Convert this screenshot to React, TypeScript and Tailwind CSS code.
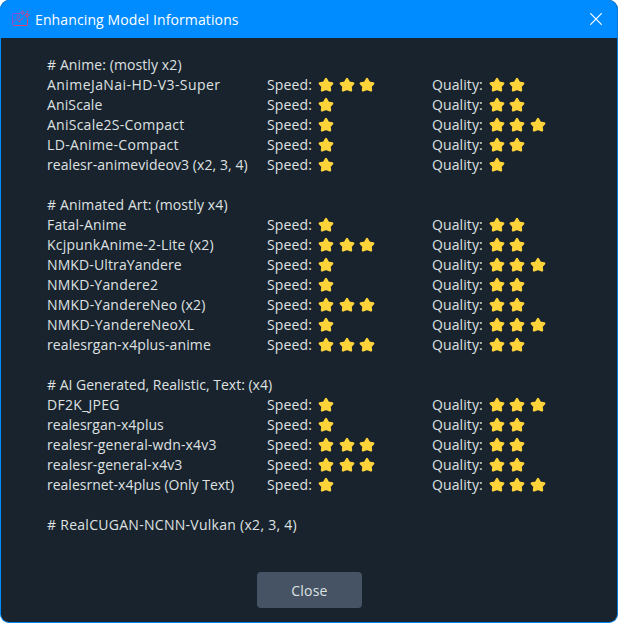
type Model = { name: string; speed: number; quality: number; tracking: string };
type Group = { title: string; tracking: string; models: Model[] };

const groups: Group[] = [
  {
    title: "# Anime: (mostly x2)",
    tracking: "tracking-[0.1px]",
    models: [
      { name: "AnimeJaNai-HD-V3-Super", speed: 3, quality: 2, tracking: "tracking-[0.43px]" },
      { name: "AniScale", speed: 1, quality: 2, tracking: "tracking-[0.12px]" },
      { name: "AniScale2S-Compact", speed: 1, quality: 3, tracking: "tracking-[0.25px]" },
      { name: "LD-Anime-Compact", speed: 1, quality: 2, tracking: "tracking-[0.34px]" },
      { name: "realesr-animevideov3 (x2, 3, 4)", speed: 1, quality: 1, tracking: "tracking-[0.07px]" },
    ],
  },
  {
    title: "# Animated Art: (mostly x4)",
    tracking: "tracking-[0.13px]",
    models: [
      { name: "Fatal-Anime", speed: 1, quality: 2, tracking: "tracking-[0.18px]" },
      { name: "KcjpunkAnime-2-Lite (x2)", speed: 3, quality: 2, tracking: "tracking-[0.22px]" },
      { name: "NMKD-UltraYandere", speed: 1, quality: 3, tracking: "tracking-[0.12px]" },
      { name: "NMKD-Yandere2", speed: 1, quality: 2, tracking: "tracking-[0.2px]" },
      { name: "NMKD-YandereNeo (x2)", speed: 3, quality: 2, tracking: "tracking-[0.2px]" },
      { name: "NMKD-YandereNeoXL", speed: 1, quality: 3, tracking: "tracking-[0.26px]" },
      { name: "realesrgan-x4plus-anime", speed: 3, quality: 2, tracking: "tracking-[0.1px]" },
    ],
  },
  {
    title: "# AI Generated, Realistic, Text: (x4)",
    tracking: "tracking-normal",
    models: [
      { name: "DF2K_JPEG", speed: 1, quality: 3, tracking: "tracking-[0.27px]" },
      { name: "realesrgan-x4plus", speed: 1, quality: 2, tracking: "tracking-[0.03px]" },
      { name: "realesr-general-wdn-x4v3", speed: 3, quality: 2, tracking: "tracking-[0.15px]" },
      { name: "realesr-general-x4v3", speed: 3, quality: 2, tracking: "tracking-[0.1px]" },
      { name: "realesrnet-x4plus (Only Text)", speed: 1, quality: 3, tracking: "tracking-normal" },
    ],
  },
];

function Stars({ count }: { count: number }) {
  return (
    <span className="flex gap-[4.5px]">
      {Array.from({ length: count }, (_, i) => (
        <svg key={i} className="h-4 w-4" viewBox="0 0 16 16" fill="#ffd43b" stroke="#ffd43b" strokeWidth="2.4" strokeLinejoin="round">
          <path d="M8 2.1 10 5.6 14.2 6.4 11.5 9.5 12 13.4 8 11.9 4 13.4 4.5 9.5 1.8 6.4 6 5.6Z" />
        </svg>
      ))}
    </span>
  );
}

function AppIcon() {
  return (
    <svg className="h-[18px] w-[18px]" viewBox="0 0 18 18" fill="none" stroke="url(#logo)" strokeWidth="0.9">
      <defs>
        <linearGradient id="logo" gradientUnits="userSpaceOnUse" x1="0" y1="5" x2="13" y2="13">
          <stop offset="0" stopColor="#6a4df0" />
          <stop offset="0.4" stopColor="#ac4cb0" />
          <stop offset="0.75" stopColor="#ee3e6c" />
        </linearGradient>
      </defs>
      <path d="M8 3.5H1.3Q.5 3.5.5 4.5V14.5Q.5 15.5 1.5 15.5H14.5Q15.5 15.5 15.5 14.5V8.8" strokeWidth="1" />
      <path d="M1 12.3 4.5 9.3 7 11.5 11.5 7.7M7 11.5 8.5 12.5" />
      <circle cx="6.3" cy="6.7" r="1.4" />
      <path d="M10.5.6 11.1 2 12.4 2.6 11.1 3.2 10.5 4.6 9.9 3.2 8.6 2.6 9.9 2ZM15 3 15.7 4.6 17.3 5.3 15.7 6 15 7.7 14.3 6 12.7 5.3 14.3 4.6ZM15.5.8V2.2M14.8 1.5H16.2" />
    </svg>
  );
}

export default function App() {
  return (
    <div className="h-[623px] w-[618px] bg-white font-['Open_Sans','Noto_Sans',sans-serif]">
      <main className="flex h-full flex-col overflow-hidden rounded-[9px] border border-t-0 border-[#008bff] border-r-[#0879d7] border-b-[#0685ef] bg-[#19232d]">
        <header className="flex h-[38px] shrink-0 items-center bg-[#008bff] pl-[11px] pr-[15px] text-white">
          <AppIcon />
          <h1 className="ml-[5px] pt-px text-[14px] tracking-[0.12px] whitespace-nowrap">Enhancing Model Informations</h1>
          <button aria-label="Close window" className="ml-auto">
            <svg className="h-3 w-3" viewBox="0 0 12 12" stroke="white" strokeWidth="1.2">
              <path d="M.3.3 11.7 11.7M11.7.3.3 11.7" />
            </svg>
          </button>
        </header>
        <div className="flex flex-col gap-5 pt-[17px] pl-[46px] text-[14px] leading-5 whitespace-nowrap text-[#dfe1e2]">
          {groups.map((group) => (
            <section key={group.title}>
              <h2 className={group.tracking}>{group.title}</h2>
              {group.models.map((m) => (
                <div key={m.name} className="flex h-5 items-center">
                  <span className={`w-[220px] ${m.tracking}`}>{m.name}</span>
                  <span className="w-[51px] tracking-[0.15px]">Speed:</span>
                  <span className="w-[114px]"><Stars count={m.speed} /></span>
                  <span className="w-[56.5px] tracking-[0.1px]">Quality:</span>
                  <Stars count={m.quality} />
                </div>
              ))}
            </section>
          ))}
          <h2 className="tracking-[0.28px]"># RealCUGAN-NCNN-Vulkan (x2, 3, 4)</h2>
        </div>
        <button className="mt-[37px] ml-[256px] h-9 w-[105px] shrink-0 rounded-[4px] bg-[#455364] text-[14px] tracking-[0.2px] text-[#dfe1e2]">Close</button>
      </main>
    </div>
  );
}
